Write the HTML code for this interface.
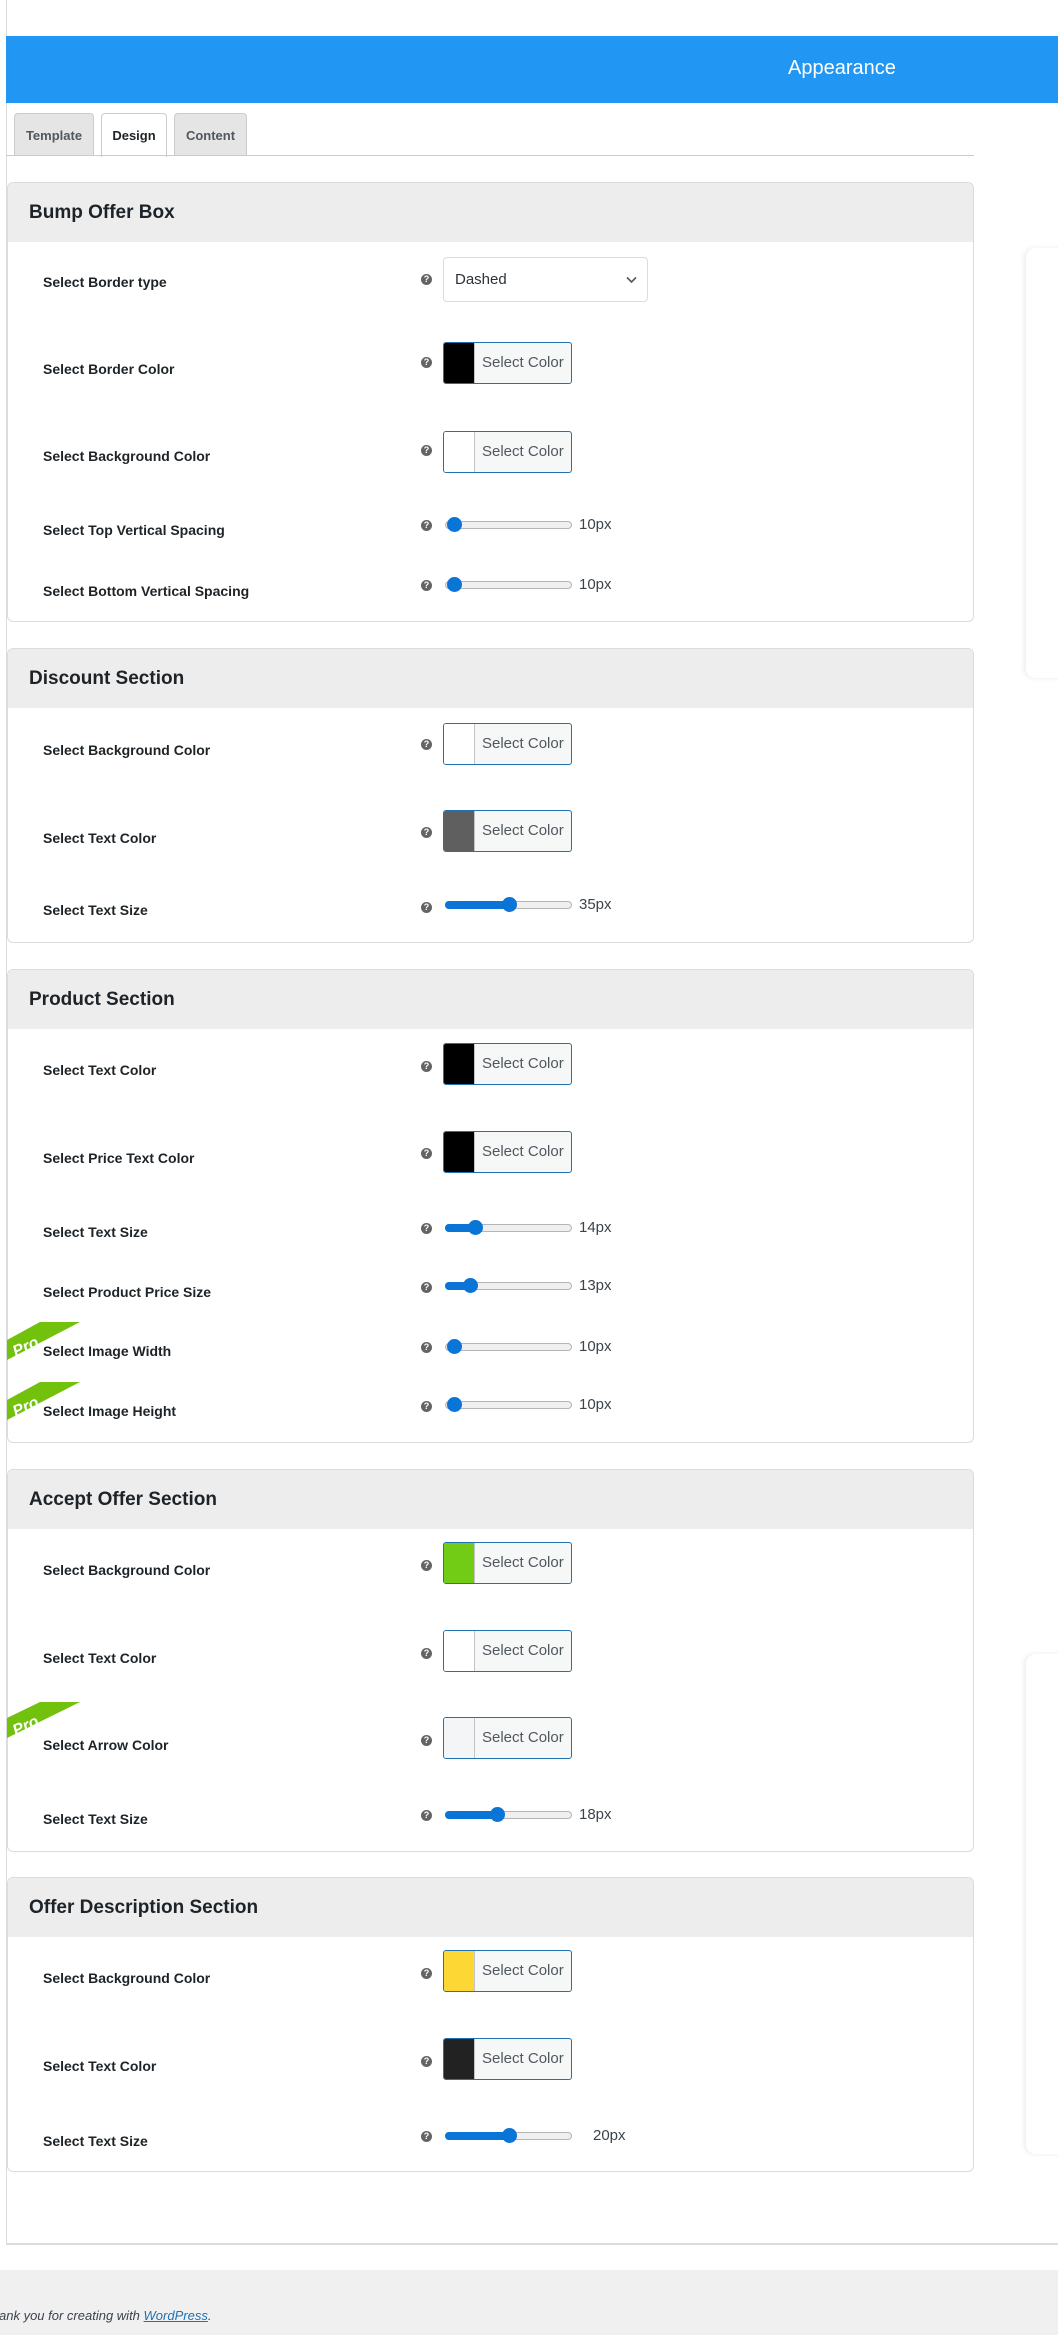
<!DOCTYPE html>
<html><head><meta charset="utf-8"><style>
*{box-sizing:border-box;margin:0;padding:0}
body{width:1058px;height:2335px;position:relative;background:#fff;font-family:"Liberation Sans",sans-serif;overflow:hidden;color:#1d2327}
.abs{position:absolute}
.bar{left:6px;top:36px;width:1052px;height:67px;background:#2196f3}
.bar span{position:absolute;left:782px;top:21px;color:#fff;font-size:20px}
.tab{position:absolute;top:113px;height:43px;background:#e5e5e5;border:1px solid #ccc;border-bottom:none;border-radius:4px 4px 0 0;font-size:13px;font-weight:bold;color:#50575e;text-align:center;line-height:44px}
.tab.on{background:#fff;color:#1d2327;height:44px}
.panel{position:absolute;left:7px;width:967px;border:1px solid #dcdcde;border-radius:6px;background:#fff;overflow:hidden}
.panel h2{height:59px;background:#ededed;font-size:19px;font-weight:bold;padding-left:21px;line-height:60px;color:#1d2327}
.lbl{position:absolute;left:43px;font-size:14px;font-weight:bold;color:#1d2327}
.help{position:absolute;left:421px;width:11px;height:11px;border-radius:50%;background:#646464;color:#fff;font-size:9px;font-weight:bold;text-align:center;line-height:11px}
.cb{position:absolute;left:443px;width:129px;height:42px;border:1px solid #2271b1;border-radius:3px;background:#f6f7f7;overflow:hidden}
.cb i{position:absolute;left:0;top:0;width:31px;height:100%;border-right:1px solid #c3c4c7}
.cb span{position:absolute;left:38px;top:11px;font-size:15px;color:#50575e}
.sl{position:absolute;left:445px;width:127px;height:8px;border:1px solid #b5b5b5;border-radius:4px;background:#efefef}
.sl b{position:absolute;left:-1px;top:-1px;height:8px;background:#0a75d6;border-radius:4px}
.sl u{position:absolute;top:-5px;width:15px;height:15px;border-radius:50%;background:#0a75d6;margin-left:-7px}
.val{position:absolute;font-size:15px;color:#3c434a}
.card{position:absolute;left:1026px;width:40px;background:#fff;border-radius:10px 0 0 10px;box-shadow:-2px 0 6px rgba(0,0,0,.08)}
</style></head><body>
<div class="abs" style="left:6px;top:0;width:1px;height:2245px;background:#dcdcde"></div>
<div class="abs bar"><span>Appearance</span></div>
<div class="tab" style="left:14px;width:80px">Template</div>
<div class="tab on" style="left:101px;width:66px">Design</div>
<div class="tab" style="left:174px;width:73px">Content</div>
<div class="abs" style="left:6px;top:155px;width:968px;height:1px;background:#ccc"></div>
<div class="abs" style="left:6px;top:2243px;width:1060px;height:2px;background:#dcdcde;border-radius:0 0 0 6px"></div>
<div class="card" style="top:248px;height:430px"></div>
<div class="card" style="top:1654px;height:500px"></div>

<div class="panel" style="top:182px;height:440px"><h2>Bump Offer Box</h2></div>
<div class="panel" style="top:648px;height:295px"><h2>Discount Section</h2></div>
<div class="panel" style="top:969px;height:474px"><h2>Product Section</h2></div>
<div class="panel" style="top:1469px;height:383px"><h2>Accept Offer Section</h2></div>
<div class="panel" style="top:1877px;height:295px"><h2>Offer Description Section</h2></div>

<!-- Bump -->
<div class="lbl" style="top:274px">Select Border type</div>
<div class="help" style="top:274px">?</div>
<div class="abs" style="left:443px;top:257px;width:205px;height:45px;border:1px solid #dcdcde;border-radius:4px;font-size:15px;color:#2c3338;padding:13px 0 0 11px">Dashed
<svg class="abs" style="right:10px;top:18px" width="11" height="8" viewBox="0 0 11 8"><path d="M1 1.5l4.5 4.5 4.5-4.5" stroke="#50575e" stroke-width="1.6" fill="none"/></svg></div>
<div class="lbl" style="top:361px">Select Border Color</div><div class="help" style="top:357px">?</div>
<div class="cb" style="top:342px"><i style="background:#000"></i><span>Select Color</span></div>
<div class="lbl" style="top:448px">Select Background Color</div><div class="help" style="top:445px">?</div>
<div class="cb" style="top:431px"><i style="background:#fff"></i><span>Select Color</span></div>
<div class="lbl" style="top:522px">Select Top Vertical Spacing</div><div class="help" style="top:520px">?</div>
<div class="sl" style="top:521px"><b style="width:0"></b><u style="left:8px"></u></div><div class="val" style="left:579px;top:516px">10px</div>
<div class="lbl" style="top:583px">Select Bottom Vertical Spacing</div><div class="help" style="top:580px">?</div>
<div class="sl" style="top:581px"><b style="width:0"></b><u style="left:8px"></u></div><div class="val" style="left:579px;top:576px">10px</div>

<!-- Discount -->
<div class="lbl" style="top:742px">Select Background Color</div><div class="help" style="top:739px">?</div>
<div class="cb" style="top:723px"><i style="background:#fff"></i><span>Select Color</span></div>
<div class="lbl" style="top:830px">Select Text Color</div><div class="help" style="top:827px">?</div>
<div class="cb" style="top:810px"><i style="background:#5f5f5f"></i><span>Select Color</span></div>
<div class="lbl" style="top:902px">Select Text Size</div><div class="help" style="top:902px">?</div>
<div class="sl" style="top:901px"><b style="width:64px"></b><u style="left:63px"></u></div><div class="val" style="left:579px;top:896px">35px</div>

<!-- Product -->
<div class="lbl" style="top:1062px">Select Text Color</div><div class="help" style="top:1061px">?</div>
<div class="cb" style="top:1043px"><i style="background:#000"></i><span>Select Color</span></div>
<div class="lbl" style="top:1150px">Select Price Text Color</div><div class="help" style="top:1148px">?</div>
<div class="cb" style="top:1131px"><i style="background:#000"></i><span>Select Color</span></div>
<div class="lbl" style="top:1224px">Select Text Size</div><div class="help" style="top:1223px">?</div>
<div class="sl" style="top:1224px"><b style="width:30px"></b><u style="left:29px"></u></div><div class="val" style="left:579px;top:1219px">14px</div>
<div class="lbl" style="top:1284px">Select Product Price Size</div><div class="help" style="top:1282px">?</div>
<div class="sl" style="top:1282px"><b style="width:25px"></b><u style="left:24px"></u></div><div class="val" style="left:579px;top:1277px">13px</div>
<div class="lbl" style="top:1343px">Select Image Width</div><div class="help" style="top:1342px">?</div>
<div class="sl" style="top:1343px"><b style="width:0"></b><u style="left:8px"></u></div><div class="val" style="left:579px;top:1338px">10px</div>
<div class="lbl" style="top:1403px">Select Image Height</div><div class="help" style="top:1401px">?</div>
<div class="sl" style="top:1401px"><b style="width:0"></b><u style="left:8px"></u></div><div class="val" style="left:579px;top:1396px">10px</div>

<!-- Accept -->
<div class="lbl" style="top:1562px">Select Background Color</div><div class="help" style="top:1560px">?</div>
<div class="cb" style="top:1542px"><i style="background:#72cc16"></i><span>Select Color</span></div>
<div class="lbl" style="top:1650px">Select Text Color</div><div class="help" style="top:1648px">?</div>
<div class="cb" style="top:1630px"><i style="background:#fff"></i><span>Select Color</span></div>
<div class="lbl" style="top:1737px">Select Arrow Color</div><div class="help" style="top:1735px">?</div>
<div class="cb" style="top:1717px"><i style="background:#f3f5f6"></i><span>Select Color</span></div>
<div class="lbl" style="top:1811px">Select Text Size</div><div class="help" style="top:1810px">?</div>
<div class="sl" style="top:1811px"><b style="width:52px"></b><u style="left:51px"></u></div><div class="val" style="left:579px;top:1806px">18px</div>

<!-- Offer desc -->
<div class="lbl" style="top:1970px">Select Background Color</div><div class="help" style="top:1968px">?</div>
<div class="cb" style="top:1950px"><i style="background:#fdd835"></i><span>Select Color</span></div>
<div class="lbl" style="top:2058px">Select Text Color</div><div class="help" style="top:2056px">?</div>
<div class="cb" style="top:2038px"><i style="background:#222"></i><span>Select Color</span></div>
<div class="lbl" style="top:2133px">Select Text Size</div><div class="help" style="top:2131px">?</div>
<div class="sl" style="top:2132px"><b style="width:64px"></b><u style="left:63px"></u></div><div class="val" style="left:593px;top:2127px">20px</div>

<!-- Pro badges -->
<svg class="abs" style="left:0;top:0" width="100" height="1800">
<g><polygon points="7,1340 40,1322 80,1322 7,1360" fill="#72c10c"/><text x="11" y="1354" fill="#fff" font-size="16" font-weight="bold" font-style="italic" font-family="Liberation Sans" transform="rotate(-25 20 1345)">Pro</text></g>
<g><polygon points="7,1400 40,1382 80,1382 7,1420" fill="#72c10c"/><text x="11" y="1414" fill="#fff" font-size="16" font-weight="bold" font-style="italic" font-family="Liberation Sans" transform="rotate(-25 20 1405)">Pro</text></g>
<g><polygon points="7,1718 40,1702 80,1702 7,1738" fill="#72c10c"/><text x="11" y="1733" fill="#fff" font-size="16" font-weight="bold" font-style="italic" font-family="Liberation Sans" transform="rotate(-25 20 1724)">Pro</text></g>
</svg>

<div class="abs" style="left:0;top:2270px;width:1058px;height:65px;background:#f0f0f1"></div>
<div class="abs" style="left:-1px;top:2308px;font-size:13px;font-style:italic;color:#3c434a">ank you for creating with <span style="color:#2271b1;text-decoration:underline">WordPress</span>.</div>
</body></html>
